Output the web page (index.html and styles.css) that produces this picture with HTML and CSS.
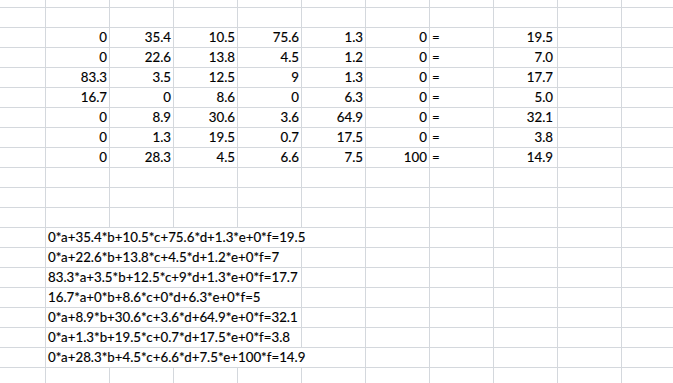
FILE: index.html
```html
<!DOCTYPE html>
<html lang="en">
<head>
<meta charset="utf-8">
<title>Sheet</title>
<link rel="stylesheet" href="styles.css">
</head>
<body>
<div class="sheet">
  <div class="row top"></div>
  <div class="row"></div>

  <div class="row"><span></span><span class="num">0</span><span class="num">35.4</span><span class="num">10.5</span><span class="num">75.6</span><span class="num">1.3</span><span class="num">0</span><span class="eq">=</span><span class="num res">19.5</span></div>
  <div class="row"><span></span><span class="num">0</span><span class="num">22.6</span><span class="num">13.8</span><span class="num">4.5</span><span class="num">1.2</span><span class="num">0</span><span class="eq">=</span><span class="num res">7.0</span></div>
  <div class="row"><span></span><span class="num">83.3</span><span class="num">3.5</span><span class="num">12.5</span><span class="num">9</span><span class="num">1.3</span><span class="num">0</span><span class="eq">=</span><span class="num res">17.7</span></div>
  <div class="row"><span></span><span class="num">16.7</span><span class="num">0</span><span class="num">8.6</span><span class="num">0</span><span class="num">6.3</span><span class="num">0</span><span class="eq">=</span><span class="num res">5.0</span></div>
  <div class="row"><span></span><span class="num">0</span><span class="num">8.9</span><span class="num">30.6</span><span class="num">3.6</span><span class="num">64.9</span><span class="num">0</span><span class="eq">=</span><span class="num res">32.1</span></div>
  <div class="row"><span></span><span class="num">0</span><span class="num">1.3</span><span class="num">19.5</span><span class="num">0.7</span><span class="num">17.5</span><span class="num">0</span><span class="eq">=</span><span class="num res">3.8</span></div>
  <div class="row"><span></span><span class="num">0</span><span class="num">28.3</span><span class="num">4.5</span><span class="num">6.6</span><span class="num">7.5</span><span class="num">100</span><span class="eq">=</span><span class="num res">14.9</span></div>

  <div class="row"></div>
  <div class="row"></div>
  <div class="row"></div>

  <div class="row"><span></span><span class="formula">0*a+35.4*b+10.5*c+75.6*d+1.3*e+0*f=19.5</span></div>
  <div class="row"><span></span><span class="formula short">0*a+22.6*b+13.8*c+4.5*d+1.2*e+0*f=7</span></div>
  <div class="row"><span></span><span class="formula short">83.3*a+3.5*b+12.5*c+9*d+1.3*e+0*f=17.7</span></div>
  <div class="row"><span></span><span class="formula short">16.7*a+0*b+8.6*c+0*d+6.3*e+0*f=5</span></div>
  <div class="row"><span></span><span class="formula short">0*a+8.9*b+30.6*c+3.6*d+64.9*e+0*f=32.1</span></div>
  <div class="row"><span></span><span class="formula short">0*a+1.3*b+19.5*c+0.7*d+17.5*e+0*f=3.8</span></div>
  <div class="row"><span></span><span class="formula">0*a+28.3*b+4.5*c+6.6*d+7.5*e+100*f=14.9</span></div>

  <div class="row bottom"></div>
</div>
</body>
</html>
```
FILE: styles.css
```css
html, body {
  margin: 0;
  padding: 0;
  background: #ffffff;
  overflow: hidden;
}

body {
  width: 673px;
  height: 383px;
  font-family: "Lato", "Liberation Sans", sans-serif;
  font-size: 13.3px;
  color: #000000;
  -webkit-text-stroke: 0.15px #000000;
}

.sheet {
  width: 673px;
  height: 383px;
  overflow: hidden;
  display: flex;
  flex-direction: column;
  background-color: #ffffff;
  background-image:
    linear-gradient(to right, #d4d8dd 1px, transparent 1px),
    linear-gradient(to bottom, #d4d8dd 1px, transparent 1px);
  background-size: 64px 100%, 100% 20px;
  background-position: 45px 0, 0 7px;
}

.row {
  display: grid;
  grid-template-columns: 46px repeat(9, 64px) 51px;
  height: 20px;
  flex: none;
}

.row.top {
  height: 8px;
}

.row.bottom {
  height: 15px;
}

.row > span {
  display: block;
  line-height: 19px;
  height: 19px;
  white-space: nowrap;
  overflow: visible;
}

.num {
  text-align: right;
  padding-right: 3px;
}

.num.res {
  padding-right: 5px;
}

.eq {
  padding-left: 2px;
}

.formula {
  grid-column: span 5;
  background: #ffffff;
  margin-right: 1px;
  padding-left: 2px;
}

.formula.short {
  grid-column: span 4;
}
```
